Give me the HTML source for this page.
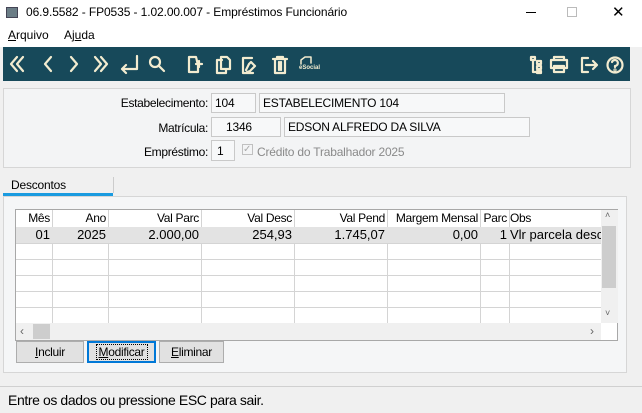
<!DOCTYPE html><html><head><meta charset="utf-8"><style>
*{box-sizing:border-box;margin:0;padding:0}
body{width:642px;height:413px;overflow:hidden;background:#f0f0f0;font-family:"Liberation Sans",sans-serif;font-size:12px;color:#000;position:relative}
.a{position:absolute}
.tb{left:3px;top:47px;width:627px;height:34px;background:#17495a}
.fld{position:absolute;background:#f7f8f9;border:1px solid #c9c9c9;height:20px;font-size:12px;line-height:18px;padding-left:3px;letter-spacing:-0.2px}
.lbl{position:absolute;text-align:right;font-size:12px;letter-spacing:-0.3px}
.g{left:15px;top:209px;width:603px;height:132px;border:1px solid #a8a8a8;background:#fff}
.hdr,.row{position:absolute;left:0;width:585px;height:16px;font-size:12px}
.c{position:absolute;top:0;height:100%;text-align:right;padding-right:2px;line-height:16px;white-space:nowrap;overflow:hidden}
.hdr .c{letter-spacing:-0.3px}
.btn{position:absolute;top:341px;height:22px;background:#e1e1e1;border:1px solid #adadad;font-size:12px;text-align:center;line-height:20px;letter-spacing:-0.3px}
</style></head><body>
<div class="a" style="left:0;top:0;width:642px;height:47px;background:#fff"></div>
<div class="a" style="left:6px;top:7px;width:12px;height:11px;background:#6b7d86;border:1px solid #445"></div>
<div class="a" style="left:26px;top:5px;font-size:12px;letter-spacing:-0.1px">06.9.5582 - FP0535 - 1.02.00.007 - Empréstimos Funcionário</div>
<div class="a" style="left:526px;top:12px;width:10px;height:1px;background:#000"></div>
<div class="a" style="left:567px;top:7px;width:10px;height:10px;border:1px solid #bbb"></div>
<div class="a" style="left:612px;top:3px;font-size:15px">✕</div>
<div class="a" style="left:8px;top:28px"><u>A</u>rquivo</div>
<div class="a" style="left:64px;top:28px">Aj<u>u</u>da</div>
<div class="a tb">
<svg width="627" height="34" viewBox="3 47 627 34" style="position:absolute;left:0;top:0" fill="none" stroke="#f3ecd0" stroke-width="2.2" stroke-linecap="round" stroke-linejoin="round">
<path d="M17 57l-6 7 6 7M23 57l-6 7 6 7"/>
<path d="M51 57l-6 7 6 7"/>
<path d="M71 57l6 7-6 7"/>
<path d="M95 57l6 7-6 7M101 57l6 7-6 7"/>
<path d="M137 56v13h-15M126 65l-4 4 4 4"/>
<circle cx="155" cy="62" r="5"/><path d="M159 66l5 5"/>
<path d="M196 57h-7v15h9v-7l-2-8zM196 64h6M199 61v6"/>
<path d="M222 60h-5v13h9v-4M221 57h6l3 3v9h-9z"/>
<path d="M252 58h-9v15h10M246 70l3-6 2-2M251 62l4 4-5 5-3 1"/>
<path d="M273 59h14M277 59v-2h6v2M275 59v14h10V59M279 62v8M281 62v8"/>
<path d="M531 57h4v3h-4zM537 61h4v3h-4zM537 66h4v3h-4zM537 71h4v2h-4zM533 60v12h4"/>
<path d="M554 60v-3h10v3M551 60h16v8h-16zM554 66h10v6h-10z"/>
<path d="M588 58h-6v14h6M586 65h10M593 61l4 4-4 4"/>
<circle cx="615" cy="65" r="7.5"/><path d="M612 62a3 3 0 1 1 3 4v1"/><circle cx="615" cy="70" r=".5"/>
<path d="M301 64v-4l4-3h6v6" stroke-width="1.5"/>
</svg>
<div class="a" style="left:296px;top:18px;font-size:6px;color:#f3ecd0;font-weight:bold">eSocial</div>
</div>
<div class="a" style="left:3px;top:88px;width:628px;height:80px;border:1px solid #d6d6d6;background:#f3f4f5"></div>
<div class="lbl" style="left:100px;top:96px;width:108px">Estabelecimento:</div>
<div class="fld" style="left:211px;top:93px;width:45px">104</div>
<div class="fld" style="left:259px;top:93px;width:246px">ESTABELECIMENTO 104</div>
<div class="lbl" style="left:100px;top:121px;width:108px">Matrícula:</div>
<div class="fld" style="left:211px;top:117px;width:70px;padding-left:14px">1346</div>
<div class="fld" style="left:284px;top:117px;width:246px">EDSON ALFREDO DA SILVA</div>
<div class="lbl" style="left:100px;top:145px;width:108px">Empréstimo:</div>
<div class="fld" style="left:211px;top:140px;width:24px;height:21px;line-height:21px;padding-left:5px">1</div>
<div class="a" style="left:242px;top:144px;width:11px;height:11px;border:1px solid #c0c0c0;color:#aaa;font-size:10px;line-height:9px">✓</div>
<div class="a" style="left:257px;top:145px;color:#8a8a8a;letter-spacing:-0.2px">Crédito do Trabalhador 2025</div>
<div class="a" style="left:3px;top:196px;width:624px;height:177px;border:1px solid #d6d6d6;background:#f5f6f7"></div>
<div class="a" style="left:11px;top:178px;letter-spacing:-0.2px">Descontos</div>
<div class="a" style="left:3px;top:193px;width:110px;height:3px;background:#1a9be0"></div>
<div class="a" style="left:113px;top:177px;width:1px;height:16px;background:#ccc"></div>
<div class="a g">
<div class="hdr" style="top:0">
<div class="c" style="left:0;width:36px">Mês</div><div class="c" style="left:36px;width:56px">Ano</div><div class="c" style="left:92px;width:93px">Val Parc</div><div class="c" style="left:185px;width:93px">Val Desc</div><div class="c" style="left:278px;width:93px">Val Pend</div><div class="c" style="left:371px;width:93px">Margem Mensal</div><div class="c" style="left:464px;width:29px">Parc</div><div class="c" style="left:493px;width:92px;text-align:left;padding-left:1px">Obs</div>
</div>
<svg class="a" style="left:0;top:0" width="585" height="113"><g stroke="#d4d4d4"><path d="M36.5 0V113M92.5 0V113M185.5 0V113M278.5 0V113M371.5 0V113M464.5 0V113M493.5 0V113"/><path d="M0 33.5H585M0 49.5H585M0 65.5H585M0 81.5H585M0 97.5H585"/></g></svg>
<div class="row" style="top:17px;background:#e3e3e3;font-size:13px">
<div class="c" style="left:0;width:36px">01</div><div class="c" style="left:36px;width:56px">2025</div><div class="c" style="left:92px;width:93px">2.000,00</div><div class="c" style="left:185px;width:93px">254,93</div><div class="c" style="left:278px;width:93px">1.745,07</div><div class="c" style="left:371px;width:93px">0,00</div><div class="c" style="left:464px;width:29px">1</div><div class="c" style="left:493px;width:92px;text-align:left;padding-left:1px">Vlr parcela desc</div>
</div>
<div class="a" style="left:585px;top:0;width:17px;height:113px;background:#f0f0f0"><div class="a" style="left:1px;top:16px;width:14px;height:62px;background:#cdcdcd"></div><div class="a" style="left:4px;top:0;font-size:9px;color:#666">˄</div><div class="a" style="left:4px;top:98px;font-size:9px;color:#666">˅</div></div>
<div class="a" style="left:0;top:113px;width:585px;height:17px;background:#f0f0f0"><div class="a" style="left:17px;top:1px;width:17px;height:15px;background:#cdcdcd"></div><div class="a" style="left:4px;top:1px;color:#666">‹</div><div class="a" style="left:574px;top:1px;color:#666">›</div></div>
</div>
<div class="btn" style="left:16px;width:68px"><u>I</u>ncluir</div>
<div class="btn" style="left:87px;width:69px;border:2px solid #0078d7;line-height:18px"><span style="outline:1px dotted #000;padding:0 2px"><u>M</u>odificar</span></div>
<div class="btn" style="left:159px;width:65px"><u>E</u>liminar</div>
<div class="a" style="left:0;top:386px;width:642px;height:1px;background:#d0d0d0"></div>
<div class="a" style="left:8px;top:392px;font-size:14px;letter-spacing:-0.4px">Entre os dados ou pressione ESC para sair.</div>
</body></html>
